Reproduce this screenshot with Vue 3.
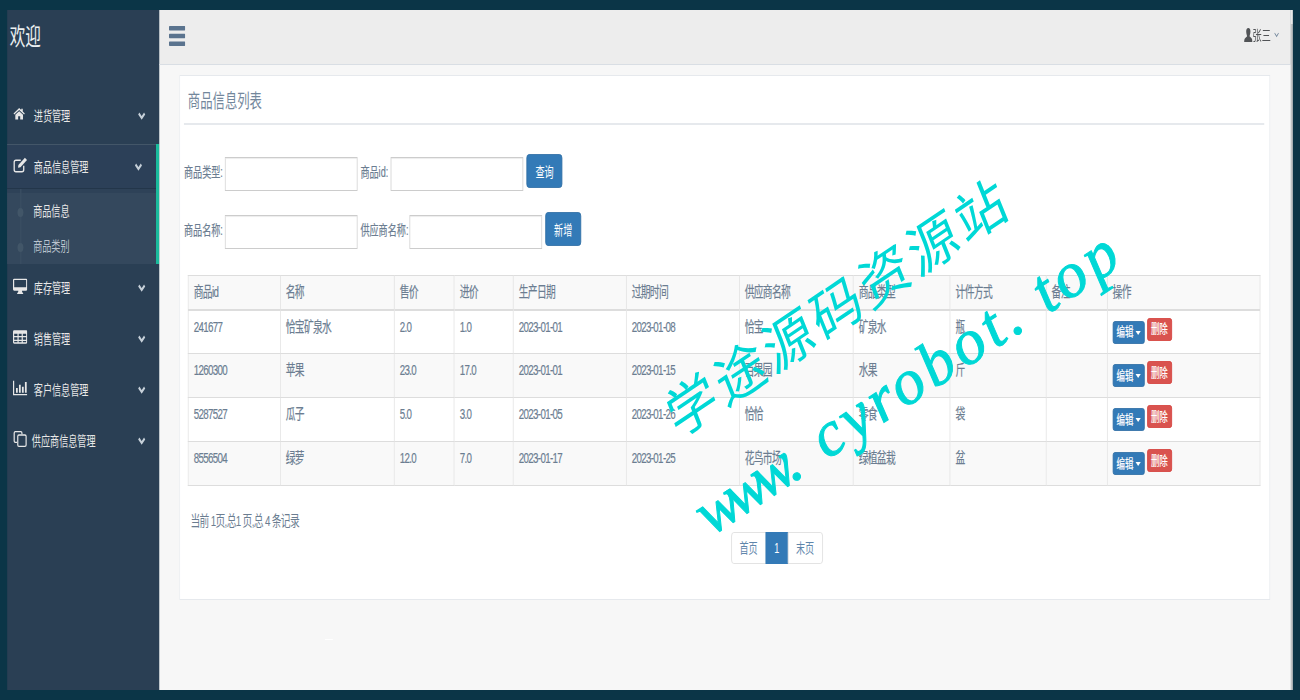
<script setup>
const navTop = [{ name: '进货管理', icon: 'home' }]
const navBottom = [
  { name: '库存管理', icon: 'desktop' },
  { name: '销售管理', icon: 'table' },
  { name: '客户信息管理', icon: 'chart' },
  { name: '供应商信息管理', icon: 'clone' }
]
const columns = ['商品id', '名称', '售价', '进价', '生产日期', '过期时间', '供应商名称', '商品类型', '计件方式', '备注', '操作']
const rows = [
  ['241677', '恰宝矿泉水', '2.0', '1.0', '2023-01-01', '2023-01-08', '恰宝', '矿泉水', '瓶', ''],
  ['1260300', '苹果', '23.0', '17.0', '2023-01-01', '2023-01-15', '百果园', '水果', '斤', ''],
  ['5287527', '瓜子', '5.0', '3.0', '2023-01-05', '2023-01-26', '恰恰', '零食', '袋', ''],
  ['8556504', '绿萝', '12.0', '7.0', '2023-01-17', '2023-01-25', '花鸟市场', '绿植盆栽', '盆', '']
]
</script>

<template>
  <div class="stage">
    <aside class="sidebar">
      <div class="brand">欢迎</div>
      <nav class="menu">
        <a v-for="item in navTop" :key="item.name" class="item">
          <svg class="ico" viewBox="0 0 24 24" preserveAspectRatio="none"><path fill="currentColor" d="M12 2 1 12l1.500 1.800L12 5.500l9.500 8.300L23 12l-4-3.600V3h-3v2.700zM4.500 14.500V23H10v-6h4v6h5.500v-8.500L12 8z"/></svg>
          <span class="label">{{ item.name }}</span>
          <svg class="chev" viewBox="0 0 12 8"><path d="M1.500 1.500 6 6l4.500-4.500" fill="none" stroke="currentColor" stroke-width="2.600"/></svg>
        </a>
        <div class="group">
          <a class="item item-active">
            <svg class="ico ico-tall" viewBox="0 0 24 24" preserveAspectRatio="none"><path fill="none" stroke="currentColor" stroke-width="2.200" d="M18 13v6a3 3 0 0 1-3 3H5a3 3 0 0 1-3-3V8a3 3 0 0 1 3-3h8"/><path fill="currentColor" d="M9 12 20 1l3.500 3.500L12.500 15.500 8.500 16z"/></svg>
            <span class="label">商品信息管理</span>
            <svg class="chev" viewBox="0 0 12 8"><path d="M1.500 1.500 6 6l4.500-4.500" fill="none" stroke="currentColor" stroke-width="2.600"/></svg>
          </a>
          <ul class="sub">
            <li>商品信息</li>
            <li class="dim">商品类别</li>
          </ul>
        </div>
        <a v-for="item in navBottom" :key="item.name" class="item" :class="{ wide: item.name.length > 6 }">
          <svg class="ico ico-tall" viewBox="0 0 24 24" preserveAspectRatio="none">
            <path v-if="item.icon === 'desktop'" fill="currentColor" fill-rule="evenodd" d="M2 1h20a2 2 0 0 1 2 2v14a2 2 0 0 1-2 2h-7c0 2 1 2.500 2 3.500V24H7v-1.500c1-1 2-1.500 2-3.500H2a2 2 0 0 1-2-2V3a2 2 0 0 1 2-2zm0 2v11h20V3z"/>
            <path v-else-if="item.icon === 'table'" fill="currentColor" fill-rule="evenodd" d="M2 2h20a2 2 0 0 1 2 2v16a2 2 0 0 1-2 2H2a2 2 0 0 1-2-2V4a2 2 0 0 1 2-2zm0 5v3.500h5.500V7zm7.500 0v3.500h5V7zm7 0v3.500H22V7zM2 12.500V16h5.500v-3.500zm7.500 0V16h5v-3.500zm7 0V16H22v-3.500zM2 18v2h5.500v-2zm7.500 0v2h5v-2zm7 0v2H22v-2z"/>
            <path v-else-if="item.icon === 'chart'" fill="currentColor" d="M0 1h2v20h22v2H0zM5 12h3v7H5zM10 7h3v12h-3zM15 10h3v9h-3zM20 3h3v16h-3z"/>
            <g v-else fill="none" stroke="currentColor" stroke-width="2">
              <path d="M15 5V3a2 2 0 0 0-2-2H4a2 2 0 0 0-2 2v12a2 2 0 0 0 2 2h3"/>
              <rect x="8" y="6" width="14" height="17" rx="2"/>
            </g>
          </svg>
          <span class="label">{{ item.name }}</span>
          <svg class="chev" viewBox="0 0 12 8"><path d="M1.500 1.500 6 6l4.500-4.500" fill="none" stroke="currentColor" stroke-width="2.600"/></svg>
        </a>
      </nav>
    </aside>

    <div class="main">
      <header class="topbar">
        <svg class="bars" viewBox="0 0 24 20" preserveAspectRatio="none"><path fill="#5a738e" d="M1 0h22a1 1 0 0 1 1 1v2.500a1 1 0 0 1-1 1H1a1 1 0 0 1-1-1V1a1 1 0 0 1 1-1zM1 7.700h22a1 1 0 0 1 1 1v2.600a1 1 0 0 1-1 1H1a1 1 0 0 1-1-1V8.700a1 1 0 0 1 1-1zM1 15.500h22a1 1 0 0 1 1 1V19a1 1 0 0 1-1 1H1a1 1 0 0 1-1-1v-2.500a1 1 0 0 1 1-1z"/></svg>
        <div class="user">
          <svg class="user-ico" viewBox="0 0 12 14" preserveAspectRatio="none"><path fill="#515356" d="M6 0c2 0 3 1.500 3 3.500S8 7 7.800 8.500C9.500 9.500 12 10 12 14H0c0-4 2.500-4.500 4.200-5.500C4 7 3 5.500 3 3.500S4 0 6 0z"/></svg>
          <span>张三</span>
          <svg class="user-caret" viewBox="0 0 12 8" preserveAspectRatio="none"><path d="M1.500 1.500 6 6l4.500-4.500" fill="none" stroke="#73879c" stroke-width="1.600"/></svg>
        </div>
      </header>

      <section class="content">
        <div class="panel">
          <h2 class="title">商品信息列表</h2>
          <div class="filter">
            <div class="filter-row">
              <label>商品类型:</label><input class="input" type="text">
              <label class="second">商品id:</label><input class="input" type="text">
              <button class="btn btn-blue" type="button">查询</button>
            </div>
            <div class="filter-row">
              <label>商品名称:</label><input class="input" type="text">
              <label class="second">供应商名称:</label><input class="input" type="text">
              <button class="btn btn-blue" type="button">新增</button>
            </div>
          </div>

          <table class="grid">
            <colgroup>
              <col style="width:141.500px"><col style="width:175.400px"><col style="width:92.300px"><col style="width:90.800px">
              <col style="width:173.800px"><col style="width:173.800px"><col style="width:175.400px"><col style="width:149.200px">
              <col style="width:147.700px"><col style="width:93.800px"><col style="width:235.500px">
            </colgroup>
            <thead>
              <tr><th v-for="c in columns" :key="c">{{ c }}</th></tr>
            </thead>
            <tbody>
              <tr v-for="row in rows" :key="row[0]">
                <td v-for="(cell, i) in row" :key="i">{{ cell }}</td>
                <td>
                  <div class="ops">
                    <button class="mini mini-blue" type="button">编辑<i class="caret"></i></button>
                    <button class="mini mini-red" type="button">删除</button>
                  </div>
                </td>
              </tr>
            </tbody>
          </table>

          <div class="summary">当前 1页,总1 页,总 4 条记录</div>
          <div class="pager">
            <a>首页</a><a class="on">1</a><a>末页</a>
          </div>
        </div>
        <i class="speck"></i>
      </section>
    </div>
    <div class="scrollbar"></div>
  </div>

  <div class="mark mark-cn">学途源码资源站</div>
  <div class="mark mark-en"><span class="www">www</span>. cyrobot. top</div>
</template>

<style>
html, body {
  margin: 0;
  height: 700px;
  overflow: hidden;
  background: #0b3547;
}
</style>

<style scoped>
/* the reference is a 2000px wide page squeezed to 1300px, so everything in .stage is in 2000px units */
.stage {
  box-sizing: border-box;
  width: 2000px;
  height: 700px;
  padding: 10px 11px;
  display: flex;
  transform: scaleX(0.65);
  transform-origin: 0 0;
  filter: blur(0.4px);
  font-family: "Liberation Sans", "Noto Sans CJK SC", sans-serif;
  font-size: 14px;
  line-height: 20px;
  color: #6b7d91;
}
.sidebar {
  width: 234px;
  flex: none;
  background: #2a3f54;
  color: #e7e7e7;
}
.brand {
  height: 52px;
  padding-left: 4px;
  font-size: 24px;
  line-height: 54px;
  color: #ecf0f1;
}
.menu {
  padding-top: 28px;
}
.item {
  display: flex;
  align-items: center;
  height: 51px;
  padding-left: 9px;
  box-sizing: border-box;
}
.ico {
  width: 19px;
  height: 13px;
  flex: none;
  margin-top: -4px;
  color: #e7e7e7;
}
.ico-tall {
  width: 22px;
  height: 16px;
}
.label {
  margin-left: 13px;
  flex: 1;
  margin-top: 1px;
}
.ico-tall + .label {
  margin-left: 10px;
}
.wide .label {
  margin-left: 7px;
}
.chev {
  width: 14px;
  height: 8px;
  margin-right: 20px;
  color: #c6d0d9;
  flex: none;
}
.group {
  margin-top: 3px;
  border-right: 5px solid #1abb9c;
}
.item-active {
  height: 45px;
  background: #2c4058;
  border-top: 1px solid #435668;
  border-bottom: 1px solid #23364a;
}
.sub {
  position: relative;
  margin: 0;
  padding: 5px 0 0 40px;
  height: 75px;
  box-sizing: border-box;
  list-style: none;
  background: linear-gradient(#2e4258 0 4px, #34485d 4px);
  font-size: 14px;
}
.sub::before {
  content: "";
  position: absolute;
  left: 20px;
  top: 0;
  bottom: 0;
  width: 2px;
  background: #3b4f63;
}
.sub li {
  position: relative;
  height: 35px;
  line-height: 35px;
  color: #e7e7e7;
}
.sub li::before {
  content: "";
  position: absolute;
  left: -24px;
  top: 14px;
  width: 9px;
  height: 9px;
  border-radius: 50%;
  background: #425668;
}
.sub .dim {
  color: #b9c3cd;
}
.group + .item {
  margin-top: -2px;
}
.main {
  flex: 1;
  min-width: 0;
  display: flex;
  flex-direction: column;
}
.topbar {
  height: 55px;
  box-sizing: border-box;
  flex: none;
  display: flex;
  align-items: center;
  justify-content: space-between;
  padding: 0 18px 0 15px;
  background: #ededed;
  border-bottom: 1px solid #d9dee4;
}
.bars {
  width: 25px;
  height: 20px;
  margin-top: -3px;
}
.user {
  display: flex;
  align-items: center;
  margin-top: -4px;
  color: #515356;
  font-size: 14px;
}
.user-ico {
  width: 13px;
  height: 14px;
}
.user-caret {
  width: 8px;
  height: 6px;
  margin-left: 5px;
}
.content {
  position: relative;
  flex: 1;
  min-height: 0;
  padding: 10px 32px 0 31px;
  background: #f7f7f7;
}
.panel {
  box-sizing: border-box;
  height: 525px;
  padding: 0 8px 0 6px;
  background: #fff;
  border: 1px solid #e6e9ed;
}
.title {
  margin: 0;
  height: 47px;
  padding: 0 0 0 6px;
  font-size: 19px;
  font-weight: 400;
  line-height: 52px;
  color: #73879c;
  border-bottom: 2px solid #e6e9ed;
}
.filter {
  padding-top: 29px;
  display: flex;
  flex-direction: column;
  gap: 21px;
}
.filter-row {
  display: flex;
  align-items: flex-start;
  height: 37px;
}
.filter-row label {
  width: 63px;
  font-size: 14px;
  line-height: 37px;
  white-space: nowrap;
  -webkit-text-stroke: 0.2px #6b7d91;
}
.filter-row .second {
  width: auto;
  margin-left: 4.500px;
  margin-right: 4px;
}
.filter-row + .filter-row .second {
  margin-right: 1.500px;
}
.input {
  box-sizing: border-box;
  width: 204px;
  height: 34px;
  margin: 3px 0 0;
  padding: 6px 12px;
  border: 1.500px solid #ccc;
  background: #fff;
  box-shadow: inset 0 1px 1px rgba(0, 0, 0, 0.075);
}
.btn {
  width: 55px;
  height: 34px;
  margin-left: 5px;
  padding: 0;
  border: 1px solid #2e6da4;
  border-radius: 4px;
  font: 14px "Liberation Sans", "Noto Sans CJK SC", sans-serif;
  color: #fff;
}
.btn-blue {
  background: #337ab7;
}
.grid {
  margin: 26px 0 0 6px;
  table-layout: fixed;
  width: 1650px;
  border-collapse: collapse;
  font-size: 15px;
  letter-spacing: -1px;
}
.grid th,
.grid td {
  border: 1px solid #ddd;
  padding: 6px 8px 0;
  text-align: left;
  vertical-align: top;
}
.grid th {
  height: 34px;
  box-sizing: border-box;
  font-weight: 400;
  background: #f9f9f9;
  border-bottom-width: 2px;
  -webkit-text-stroke: 0.2px #6b7d91;
}
.grid td {
  height: 44px;
  box-sizing: border-box;
  font-weight: 400;
  overflow: hidden;
  -webkit-text-stroke: 0.2px #6b7d91;
}
.grid tbody tr:nth-child(even) {
  background: #f9f9f9;
}
.ops {
  display: flex;
  align-items: flex-start;
  gap: 4px;
  margin-top: 1px;
}
.mini {
  padding: 0;
  border-radius: 3px;
  font: 13px/20px "Liberation Sans", "Noto Sans CJK SC", sans-serif;
  letter-spacing: 0;
  color: #fff;
  -webkit-text-stroke: 0.2px #fff;
}
.mini-blue {
  width: 49px;
  height: 23px;
  margin-top: 3px;
  background: #337ab7;
  border: 1px solid #2e6da4;
}
.mini-red {
  width: 38px;
  height: 23px;
  background: #d9534f;
  border: 1px solid #d43f3a;
}
.caret {
  display: inline-block;
  margin-left: 3px;
  vertical-align: middle;
  border-top: 4px solid #fff;
  border-left: 4px solid transparent;
  border-right: 4px solid transparent;
}
.summary {
  margin: 25px 0 0 10px;
  font-size: 15px;
  letter-spacing: -1px;
}
.pager {
  display: flex;
  justify-content: center;
  margin-top: 1px;
  margin-left: 163px;
}
.pager a {
  box-sizing: border-box;
  height: 32px;
  width: 54px;
  border: 1px solid #ddd;
  margin-left: -1px;
  background: #fff;
  color: #5f86ab;
  text-align: center;
  line-height: 30px;
}
.pager a:first-child {
  border-radius: 4px 0 0 4px;
}
.pager a:last-child {
  border-radius: 0 4px 4px 0;
}
.pager .on {
  width: 35px;
  background: #337ab7;
  border-color: #337ab7;
  color: #fff;
}
.speck {
  position: absolute;
  left: 255px;
  top: 574px;
  width: 12px;
  height: 1px;
  background: #fff;
}
.scrollbar {
  width: 3px;
  flex: none;
  background: linear-gradient(#e8e8e8 0 14px, #bfc2c4 14px);
}
.mark {
  position: absolute;
  white-space: nowrap;
  color: #00d8d6;
  transform-origin: 0 100%;
}
.mark-cn {
  left: 680px;
  top: 386px;
  font: 400 54px/60px "Noto Sans CJK SC", sans-serif;
  letter-spacing: 4px;
  transform: rotate(-34deg) skewX(-12deg);
}
.mark-en {
  left: 716px;
  top: 484px;
  font: italic 400 64px/60px "Liberation Serif", serif;
  letter-spacing: 4.400px;
  -webkit-text-stroke: 1px #00d8d6;
  transform: rotate(-33.400deg);
}
.www {
  letter-spacing: -10px;
}
</style>
